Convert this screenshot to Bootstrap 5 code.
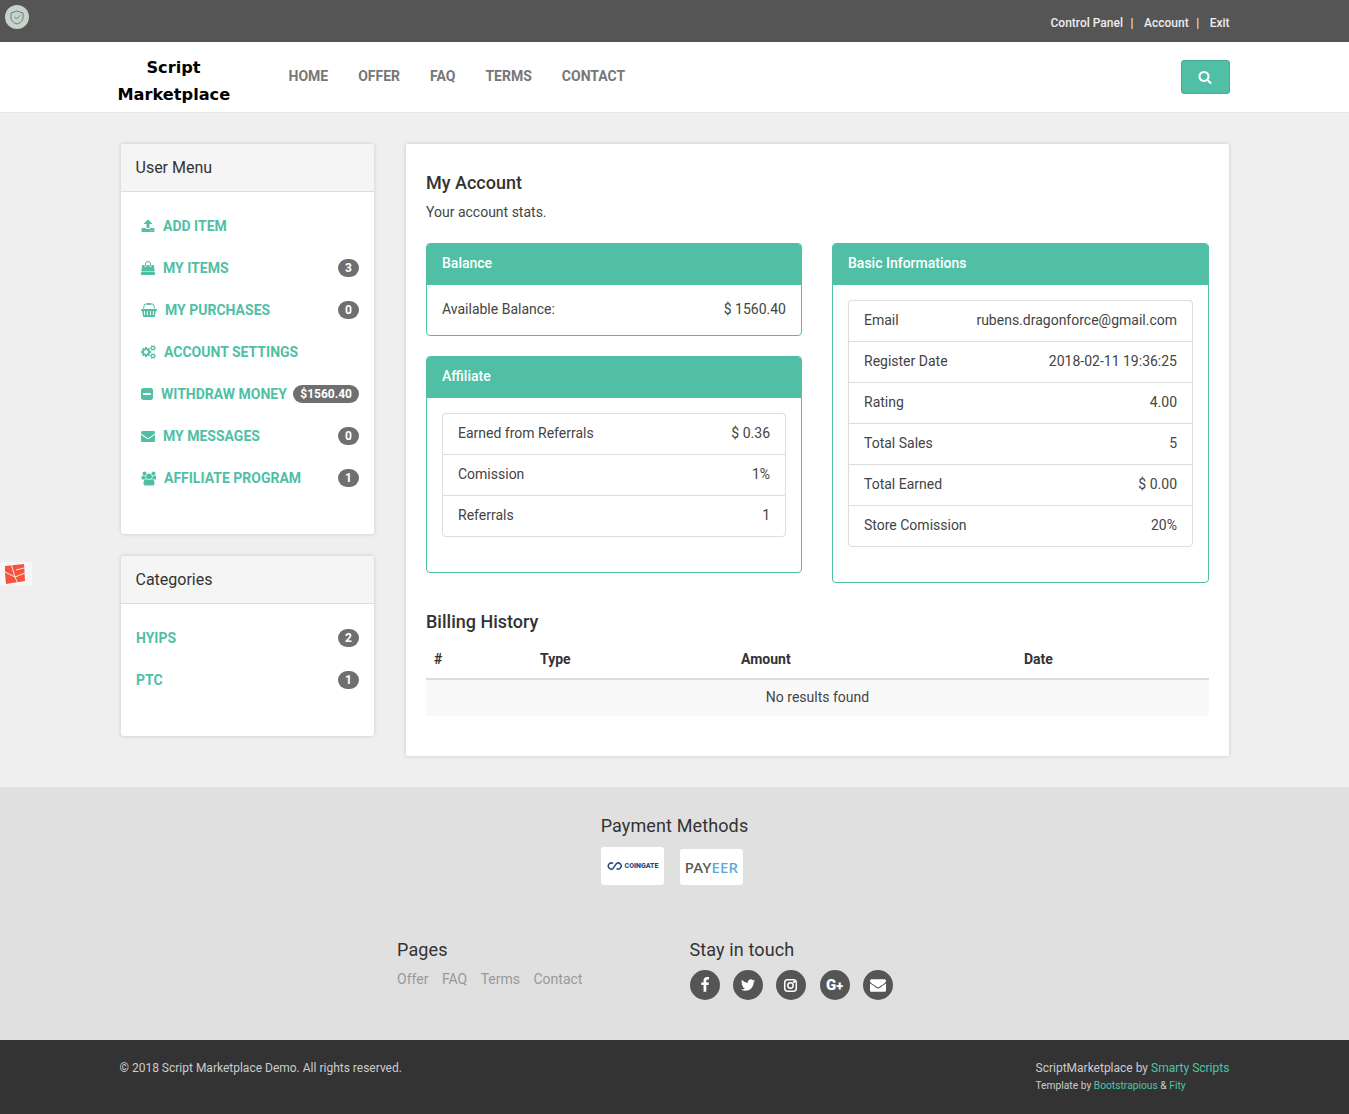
<!DOCTYPE html>
<html lang="en">
<head>
<meta charset="utf-8">
<title>Script Marketplace</title>
<link href="https://cdn.jsdelivr.net/npm/bootstrap@5.3.0/dist/css/bootstrap.min.css" rel="stylesheet">
<style>
body{font-family:Roboto,"Liberation Sans",sans-serif;font-size:14px;line-height:20px;background:#efefef;color:#333}
a{text-decoration:none}
.container{--bs-gutter-x:30px}
.row{--bs-gutter-x:30px}
.ico{fill:currentColor;display:block;flex:none}
.topstrip{background:#555;height:42px}
.topstrip .container{height:42px;display:flex;align-items:center;justify-content:flex-end}
.toplinks{color:#eee;font-size:12px;font-weight:500;margin-top:3px}
.toplinks a{color:#eee}
.toplinks .sep{margin:0 10.500px 0 7.500px}
.mainnav{--bs-navbar-nav-link-padding-x:15px;background:#fff;height:71px;border-bottom:1px solid #e5e5e5;padding:0}
.brandbox{width:112px;margin-left:-2px;color:#000;font-family:"DejaVu Sans",sans-serif;font-weight:700;font-size:16.200px;line-height:27px;text-align:center;white-space:normal;padding:7px 0 0;margin-right:44px}
.mainnav .navbar-nav{margin-top:-2px}
.mainnav .nav-link{color:#777;font-weight:700;font-size:14px;padding-top:0;padding-bottom:0;line-height:20px;text-transform:uppercase}
.searchbtn{width:49px;height:34px;background:#50bfa5;border:1px solid #45ad95;border-radius:3px;color:#fff;display:flex;align-items:center;justify-content:center;padding:0}
.pagebody{padding-top:31px;padding-bottom:31px}
.sidecard{border:0;border-radius:3px;box-shadow:0 0 4px rgba(0,0,0,.16);margin:0 .5px 22px 1.500px;background:#fff}
.sidecard:last-child{margin-bottom:0}
.sidecard .card-header{background:#f5f5f5;border-bottom:1px solid #ddd;height:48px;padding:14px 14.500px;font-size:16px;line-height:20px;color:#333;border-radius:3px 3px 0 0}
.sidecard .card-body{padding:13px 15px 35px}
.sideitem{display:flex;align-items:center;height:42px;color:#50bfa5;font-weight:700;font-size:14px;text-transform:uppercase}
.sideitem:hover{color:#50bfa5}
.sideitem .ico{margin-right:8px}
.menu-items .sideitem{padding-left:5px}
.pill{margin-left:auto;background:#6f6f6f;color:#fff;border-radius:10px;font-size:12px;font-weight:700;line-height:12px;padding:3px 7px;min-width:21px;height:18px}
.maincard{background:#fff;border-radius:2px;box-shadow:0 0 4px rgba(0,0,0,.16);padding:29px 20px 40px;margin:0 .5px 0 1.500px}
.maincard h2,.sect{font-size:18px;font-weight:500;line-height:20px;margin:0;color:#333}
.subline{margin:9px 0 21px;line-height:20px;color:#444}
.panelcol-a{flex:0 0 calc(50% - .5px);width:calc(50% - .5px)}
.panelcol-b{flex:0 0 calc(50% + .5px);width:calc(50% + .5px)}
.tealpanel{border:1px solid #50bfa5;border-radius:4px;background:#fff;margin-bottom:20px}
.tealpanel .card-header{background:#50bfa5;color:#fff;height:41px;padding:9px 15px;line-height:20px;border:0;border-radius:3px 3px 0 0;font-weight:500;font-size:14px}
.tealpanel .card-body{padding:15px 15px 35px}
.tealpanel .card-body.balbody{padding:14px 15px 16px}
.keyval{display:flex;justify-content:space-between;line-height:20px;color:#444}
.kvlist{--bs-list-group-border-color:#ddd;--bs-list-group-border-radius:4px}
.kvlist .list-group-item{display:flex;justify-content:space-between;padding:9px 15px 11px;line-height:20px;height:41px;color:#444;font-size:14px;border-bottom-width:0}
.kvlist .list-group-item+.list-group-item{border-top-width:1px}
.kvlist .list-group-item:last-child{height:42px;border-bottom-width:1px}
.sect.billhead{margin:9px 0}
.billtable{margin:0}
.billtable th{font-weight:700;padding:8px 8px 9px;line-height:20px;border-bottom:2px solid #ddd;color:#333}
.billtable td{text-align:center;padding:7px 8px 9px;line-height:20px;background:#f9f9f9;border:0;color:#444}
.colnum{width:106px}
.coltype{width:201px}
.colamount{width:283px}
.paygrey{background:#e0e0e0;height:253px;padding-top:29px}
.paytitle{font-size:18px;font-weight:400;line-height:20px;text-align:center;color:#333;margin:0 0 11px;letter-spacing:.12px}
.logos{display:flex;justify-content:center;align-items:flex-end;gap:16px;padding-right:5px}
.logotile{width:63px;background:#fff;border-radius:3px;display:flex;align-items:center;justify-content:center}
.logo-a{height:38px;color:#2d4a7f;font-size:7px;font-weight:900;gap:2px}
.logo-b{height:36px;font-size:15px;font-weight:500;color:#555;letter-spacing:.2px;font-family:"Noto Sans",sans-serif}
.logo-b span{color:#5aa9d6}
.footcols{display:flex;justify-content:center;margin-top:55px}
.footcol{width:292px;padding:0 15px}
.footcol:first-child{padding-left:14.500px}
.footcol h4{font-size:18px;font-weight:400;line-height:20px;margin:0 0 9px;color:#333;letter-spacing:.12px}
.pagelinks{display:flex;gap:13.500px;color:#999;line-height:20px}
.pagelinks a{color:#999}
.socials{display:flex;gap:13px;padding-top:1px}
.socials a{width:30px;height:30px;border-radius:50%;background:#555;color:#fff;display:flex;align-items:center;justify-content:center;font-size:15px;font-weight:900;line-height:1}
.socials a:nth-child(4){margin-left:1px}
.socials .plus{font-size:13px}
.darkbar{background:#333;height:74px;padding-top:18px;color:#ccc;font-size:12px;line-height:20px}
.darkbar .container{display:flex;justify-content:space-between}
.darkbar a{color:#4ec4a8}
.tiny{font-size:10.250px;line-height:16px}
.rightcredit{min-width:194px}
.shieldbadge{position:absolute;left:5px;top:5px;width:24px;height:24px;border-radius:50%;background:#c9d1cb;display:flex;align-items:center;justify-content:center}
.redwidget{position:absolute;left:0;top:561px;width:33px;height:26px;background:#f7f7f7;border:1px solid #eee;border-left:0;display:flex;align-items:center;padding-left:5px}
</style>
</head>
<body>
<div class="shieldbadge"><svg width="14" height="15" viewBox="0 0 14 15" fill="none" stroke="#4f8f74" stroke-width="1"><path d="M7 1 13 3V8C13 11 10 13 7 14 4 13 1 11 1 8V3Z"/><path d="M4.500 7 6.500 9 10 5.500"/></svg></div>
<div class="redwidget"><svg width="20" height="20" viewBox="0 0 20 20"><path fill="#f4533c" d="M0 2 19 0 20 17 1 20 0 9Z"/><path fill="none" stroke="#fde7e2" stroke-width="1" d="M0 8 10 13 20 9M6 0 10 13 13 20M11 6 19 4"/></svg></div>

<div class="topstrip">
  <div class="container">
    <div class="toplinks"><a href="#">Control Panel</a><span class="sep">|</span><a href="#">Account</a><span class="sep">|</span><a href="#">Exit</a></div>
  </div>
</div>

<nav class="navbar navbar-expand mainnav">
  <div class="container">
    <a class="navbar-brand brandbox" href="#">Script Marketplace</a>
    <ul class="navbar-nav me-auto">
      <li class="nav-item"><a class="nav-link" href="#">Home</a></li>
      <li class="nav-item"><a class="nav-link" href="#">Offer</a></li>
      <li class="nav-item"><a class="nav-link" href="#">FAQ</a></li>
      <li class="nav-item"><a class="nav-link" href="#">Terms</a></li>
      <li class="nav-item"><a class="nav-link" href="#">Contact</a></li>
    </ul>
    <button class="btn searchbtn" type="button" aria-label="Search"><svg class="ico" width="14" height="14" viewBox="0 0 1792 1792"><path d="M1216 832q0-185-131.500-316.500t-316.500-131.500-316.500 131.500-131.500 316.500 131.500 316.500 316.500 131.500 316.500-131.500 131.500-316.500zm512 832q0 52-38 90t-90 38q-54 0-90-38l-343-342q-179 124-399 124-143 0-273.500-55.500t-225-150-150-225-55.500-273.500 55.500-273.500 150-225 225-150 273.500-55.500 273.500 55.500 225 150 150 225 55.500 273.500q0 220-124 399l343 343q37 37 37 90z"/></svg></button>
  </div>
</nav>

<div class="container pagebody">
  <div class="row">
    <div class="col-3">
      <div class="card sidecard">
        <div class="card-header">User Menu</div>
        <div class="card-body menu-items">
          <a class="sideitem" href="#"><svg class="ico" width="14" height="14" viewBox="0 0 1792 1792"><path d="M1344 1472q0-26-19-45t-45-19-45 19-19 45 19 45 45 19 45-19 19-45zm256 0q0-26-19-45t-45-19-45 19-19 45 19 45 45 19 45-19 19-45zm128-224v320q0 40-28 68t-68 28h-1472q-40 0-68-28t-28-68v-320q0-40 28-68t68-28h427q21 56 70.500 92t110.500 36h256q61 0 110.500-36t70.500-92h427q40 0 68 28t28 68zm-325-648q-17 40-59 40h-256v448q0 26-19 45t-45 19h-256q-26 0-45-19t-19-45v-448h-256q-42 0-59-40-17-39 14-69l448-448q18-19 45-19t45 19l448 448q31 30 14 69z"/></svg>Add Item</a>
          <a class="sideitem" href="#"><svg class="ico" width="14" height="14" viewBox="0 0 1792 1792"><path d="M1757 1408l35 313q3 28-16 50-19 21-48 21h-1664q-29 0-48-21-19-22-16-50l35-313h1722zm-93-839l86 775h-1708l86-775q3-24 21-40.500t43-16.500h256v128q0 53 37.500 90.500t90.500 37.500 90.500-37.500 37.500-90.500v-128h384v128q0 53 37.500 90.500t90.500 37.500 90.500-37.500 37.500-90.500v-128h256q25 0 43 16.500t21 40.500zm-384-185v256q0 26-19 45t-45 19-45-19-19-45v-256q0-106-75-181t-181-75-181 75-75 181v256q0 26-19 45t-45 19-45-19-19-45v-256q0-159 112.500-271.500t271.500-112.500 271.500 112.500 112.500 271.500z"/></svg>My Items<span class="pill">3</span></a>
          <a class="sideitem" href="#"><svg class="ico" width="16" height="14" viewBox="0 0 2048 1792"><path d="M1920 768q53 0 90.500 37.500t37.500 90.500-37.500 90.500-90.500 37.500h-15l-115 662q-8 46-44 76t-82 30h-1280q-46 0-82-30t-44-76l-115-662h-15q-53 0-90.500-37.500t-37.500-90.500 37.500-90.500 90.500-37.500h1796zm-1435 800q26-2 43.500-22.500t15.500-46.500l-32-416q-2-26-22.500-43.500t-46.500-15.500-43.500 22.500-15.500 46.500l32 416q2 25 20.500 42t43.500 17h5zm411-64v-416q0-26-19-45t-45-19-45 19-19 45v416q0 26 19 45t45 19 45-19 19-45zm384 0v-416q0-26-19-45t-45-19-45 19-19 45v416q0 26 19 45t45 19 45-19 19-45zm352 5l32-416q2-26-15.500-46.500t-43.500-22.500-46.500 15.500-22.500 43.500l-32 416q-2 26 15.500 46.500t43.500 22.500h5q25 0 43.500-17t20.500-42zm-1156-1217l-93 412h-132l101-441q19-88 89-143.500t160-55.500h167q0-26 19-45t45-19h384q26 0 45 19t19 45h167q90 0 160 55.500t89 143.500l101 441h-132l-93-412q-11-44-45.500-72t-79.500-28h-167q0 26-19 45t-45 19h-384q-26 0-45-19t-19-45h-167q-45 0-79.500 28t-45.500 72z"/></svg>My Purchases<span class="pill">0</span></a>
          <a class="sideitem" href="#"><svg class="ico" width="15" height="14" viewBox="0 0 1920 1792"><path d="M896 896q0-106-75-181t-181-75-181 75-75 181 75 181 181 75 181-75 75-181zm768 512q0-52-38-90t-90-38-90 38-38 90q0 53 37.500 90.500t90.500 37.500 90.500-37.500 37.500-90.500zm0-1024q0-52-38-90t-90-38-90 38-38 90q0 53 37.500 90.500t90.500 37.500 90.500-37.500 37.500-90.500zm-384 421v185q0 10-7 19.500t-16 10.500l-155 24q-11 35-32 76 34 48 90 115 7 11 7 20 0 12-7 19-23 30-82.500 89.500t-78.500 59.500q-11 0-21-7l-115-90q-37 19-77 31-11 108-23 155-7 24-30 24h-186q-11 0-20-7.500t-10-17.500l-23-153q-34-10-75-31l-118 89q-7 7-20 7-11 0-21-8-144-133-144-160 0-9 7-19 10-14 41-53t47-61q-23-44-35-82l-152-24q-10-1-17-9.500t-7-19.500v-185q0-10 7-19.500t16-10.500l155-24q11-35 32-76-34-48-90-115-7-11-7-20 0-12 7-20 22-30 82-89t79-59q11 0 21 7l115 90q34-18 77-32 11-108 23-154 7-24 30-24h186q11 0 20 7.500t10 17.500l23 153q34 10 75 31l118-89q8-7 20-7 11 0 21 8 144 133 144 160 0 8-7 19-12 16-42 54t-45 60q23 48 34 82l152 23q10 2 17 10.500t7 19.500zm640 533v140q0 16-149 31-12 27-30 52 51 113 51 138 0 4-4 7-122 71-124 71-8 0-46-47t-52-68q-20 2-30 2t-30-2q-14 21-52 68t-46 47q-2 0-124-71-4-3-4-7 0-25 51-138-18-25-30-52-149-15-149-31v-140q0-16 149-31 13-29 30-52-51-113-51-138 0-4 4-7 4-2 35-20t59-34 30-16q8 0 46 46.500t52 67.500q20-2 30-2t30 2q51-71 92-112l6-2q4 0 124 70 4 3 4 7 0 25-51 138 17 23 30 52 149 15 149 31zm0-1024v140q0 16-149 31-12 27-30 52 51 113 51 138 0 4-4 7-122 71-124 71-8 0-46-47t-52-68q-20 2-30 2t-30-2q-14 21-52 68t-46 47q-2 0-124-71-4-3-4-7 0-25 51-138-18-25-30-52-149-15-149-31v-140q0-16 149-31 13-29 30-52-51-113-51-138 0-4 4-7 4-2 35-20t59-34 30-16q8 0 46 46.500t52 67.500q20-2 30-2t30 2q51-71 92-112l6-2q4 0 124 70 4 3 4 7 0 25-51 138 17 23 30 52 149 15 149 31z"/></svg>Account Settings</a>
          <a class="sideitem" href="#"><svg class="ico" width="12" height="14" viewBox="128 128 1536 1536"><path d="M1408 960v-128q0-26-19-45t-45-19h-896q-26 0-45 19t-19 45v128q0 26 19 45t45 19h896q26 0 45-19t19-45zm256-544v960q0 119-84.500 203.500t-203.500 84.500h-960q-119 0-203.500-84.500t-84.500-203.500v-960q0-119 84.500-203.500t203.500-84.500h960q119 0 203.500 84.500t84.500 203.500z"/></svg>Withdraw Money<span class="pill">$1560.40</span></a>
          <a class="sideitem" href="#"><svg class="ico" width="14" height="14" viewBox="0 0 1792 1792"><path d="M1792 710v794q0 66-47 113t-113 47h-1472q-66 0-113-47t-47-113v-794q44 49 101 87 362 246 497 345 57 42 92.500 65.500t94.500 48 110 24.500h2q51 0 110-24.500t94.500-48 92.500-65.500q170-123 498-345 57-39 100-87zm0-294q0 79-49 151t-122 123q-376 261-468 325-10 7-42.500 30.500t-54 38-52 32.500-57.500 27-50 9h-2q-23 0-50-9t-57.500-27-52-32.500-54-38-42.500-30.500q-91-64-262-182.500t-205-142.500q-62-42-117-115.500t-55-136.500q0-78 41.500-130t118.500-52h1472q65 0 112.500 47t47.500 113z"/></svg>My Messages<span class="pill">0</span></a>
          <a class="sideitem" href="#"><svg class="ico" width="15" height="15" viewBox="0 0 1920 1792"><path d="M657 896q-162 5-265 128h-134q-82 0-138-40.500t-56-118.500q0-353 124-353 6 0 43.500 21t97.500 42.500 119 21.500q67 0 133-23-5 37-5 66 0 139 81 256zm1071 637q0 120-73 189.500t-194 69.500h-874q-121 0-194-69.500t-73-189.500q0-53 3.500-103.500t14-109 26.500-108.500 43-97.500 62-81 85.500-53.500 111.500-20q10 0 43 21.500t73 48 107 48 135 21.500 135-21.500 107-48 73-48 43-21.500q61 0 111.500 20t85.500 53.500 62 81 43 97.500 26.500 108.500 14 109 3.500 103.500zm-1024-1277q0 106-75 181t-181 75-181-75-75-181 75-181 181-75 181 75 75 181zm704 384q0 159-112.500 271.500t-271.500 112.500-271.500-112.500-112.500-271.500 112.500-271.500 271.500-112.500 271.500 112.500 112.500 271.500zm576 225q0 78-56 118.500t-138 40.500h-134q-103-123-265-128 81-117 81-256 0-29-5-66 66 23 133 23 59 0 119-21.500t97.500-42.500 43.500-21q124 0 124 353zm-128-609q0 106-75 181t-181 75-181-75-75-181 75-181 181-75 181 75 75 181z"/></svg>Affiliate Program<span class="pill">1</span></a>
        </div>
      </div>
      <div class="card sidecard">
        <div class="card-header">Categories</div>
        <div class="card-body">
          <a class="sideitem" href="#">HYIPS<span class="pill">2</span></a>
          <a class="sideitem" href="#">PTC<span class="pill">1</span></a>
        </div>
      </div>
    </div>
    <div class="col-9">
      <div class="maincard">
        <h2>My Account</h2>
        <p class="subline">Your account stats.</p>
        <div class="row">
          <div class="panelcol-a">
            <div class="card tealpanel">
              <div class="card-header">Balance</div>
              <div class="card-body balbody"><div class="keyval"><span>Available Balance:</span><span>$ 1560.40</span></div></div>
            </div>
            <div class="card tealpanel">
              <div class="card-header">Affiliate</div>
              <div class="card-body">
                <ul class="list-group kvlist">
                  <li class="list-group-item"><span>Earned from Referrals</span><span>$ 0.36</span></li>
                  <li class="list-group-item"><span>Comission</span><span>1%</span></li>
                  <li class="list-group-item"><span>Referrals</span><span>1</span></li>
                </ul>
              </div>
            </div>
          </div>
          <div class="panelcol-b">
            <div class="card tealpanel">
              <div class="card-header">Basic Informations</div>
              <div class="card-body">
                <ul class="list-group kvlist">
                  <li class="list-group-item"><span>Email</span><span>rubens.dragonforce@gmail.com</span></li>
                  <li class="list-group-item"><span>Register Date</span><span>2018-02-11 19:36:25</span></li>
                  <li class="list-group-item"><span>Rating</span><span>4.00</span></li>
                  <li class="list-group-item"><span>Total Sales</span><span>5</span></li>
                  <li class="list-group-item"><span>Total Earned</span><span>$ 0.00</span></li>
                  <li class="list-group-item"><span>Store Comission</span><span>20%</span></li>
                </ul>
              </div>
            </div>
          </div>
        </div>
        <h3 class="sect billhead">Billing History</h3>
        <table class="table billtable">
          <thead><tr><th class="colnum">#</th><th class="coltype">Type</th><th class="colamount">Amount</th><th>Date</th></tr></thead>
          <tbody><tr><td colspan="4">No results found</td></tr></tbody>
        </table>
      </div>
    </div>
  </div>
</div>

<div class="paygrey">
  <h4 class="paytitle">Payment Methods</h4>
  <div class="logos">
    <div class="logotile logo-a"><svg width="16" height="8" viewBox="0 0 16 8" fill="none" stroke="#2d4a7f" stroke-width="1.500"><path d="M6 1.500A3 3 0 1 0 6 6.500L9.500 1.500A3 3 0 1 1 9.500 6.500"/></svg><span>COINGATE</span></div>
    <div class="logotile logo-b">PAY<span>EER</span></div>
  </div>
  <div class="footcols">
    <div class="footcol">
      <h4>Pages</h4>
      <div class="pagelinks"><a href="#">Offer</a><a href="#">FAQ</a><a href="#">Terms</a><a href="#">Contact</a></div>
    </div>
    <div class="footcol">
      <h4>Stay in touch</h4>
      <div class="socials">
        <a href="#" aria-label="Facebook"><svg class="ico" width="16" height="16" viewBox="0 0 1792 1792"><path d="M1343 12v264h-157q-86 0-116 36t-30 108v189h293l-39 296h-254v759h-306v-759h-255v-296h255v-218q0-186 104-288.500t277-102.500q147 0 228 12z"/></svg></a>
        <a href="#" aria-label="Twitter"><svg class="ico" width="16" height="16" viewBox="0 0 1792 1792"><path d="M1684 408q-67 98-162 167 1 14 1 42 0 130-38 259.500t-115.500 248.500-184.500 210.500-258 146-323 54.500q-271 0-496-145 35 4 78 4 225 0 401-138-105-2-188-64.500t-114-159.500q33 5 61 5 43 0 85-11-112-23-185.500-111.500t-73.500-205.500v-4q68 38 146 41-66-44-105-115t-39-154q0-88 44-163 121 149 294.500 238.500t371.500 99.500q-8-38-8-74 0-134 94.500-228.500t228.500-94.500q140 0 236 102 109-21 205-78-37 115-142 178 91-10 186-50z"/></svg></a>
        <a href="#" aria-label="Instagram"><svg width="15" height="15" viewBox="0 0 15 15" fill="none" stroke="#fff" stroke-width="1.500"><rect x="1.700" y="1.700" width="11.600" height="11.600" rx="3"/><circle cx="7.500" cy="7.500" r="2.700"/><circle cx="11" cy="4" r=".4"/></svg></a>
        <a href="#">G<span class="plus">+</span></a>
        <a href="#" aria-label="Email"><svg class="ico" width="16" height="16" viewBox="0 0 1792 1792"><path d="M1792 710v794q0 66-47 113t-113 47h-1472q-66 0-113-47t-47-113v-794q44 49 101 87 362 246 497 345 57 42 92.500 65.500t94.500 48 110 24.500h2q51 0 110-24.500t94.500-48 92.500-65.500q170-123 498-345 57-39 100-87zm0-294q0 79-49 151t-122 123q-376 261-468 325-10 7-42.500 30.500t-54 38-52 32.500-57.500 27-50 9h-2q-23 0-50-9t-57.500-27-52-32.500-54-38-42.500-30.500q-91-64-262-182.500t-205-142.500q-62-42-117-115.500t-55-136.500q0-78 41.500-130t118.500-52h1472q65 0 112.500 47t47.500 113z"/></svg></a>
      </div>
    </div>
  </div>
</div>

<div class="darkbar">
  <div class="container">
    <div>© 2018 Script Marketplace Demo. All rights reserved.</div>
    <div class="rightcredit">
      <div>ScriptMarketplace by <a href="#">Smarty Scripts</a></div>
      <div class="tiny">Template by <a href="#">Bootstrapious</a> &amp; <a href="#">Fity</a></div>
    </div>
  </div>
</div>
<script src="https://cdn.jsdelivr.net/npm/bootstrap@5.3.0/dist/js/bootstrap.bundle.min.js"></script>
</body>
</html>
